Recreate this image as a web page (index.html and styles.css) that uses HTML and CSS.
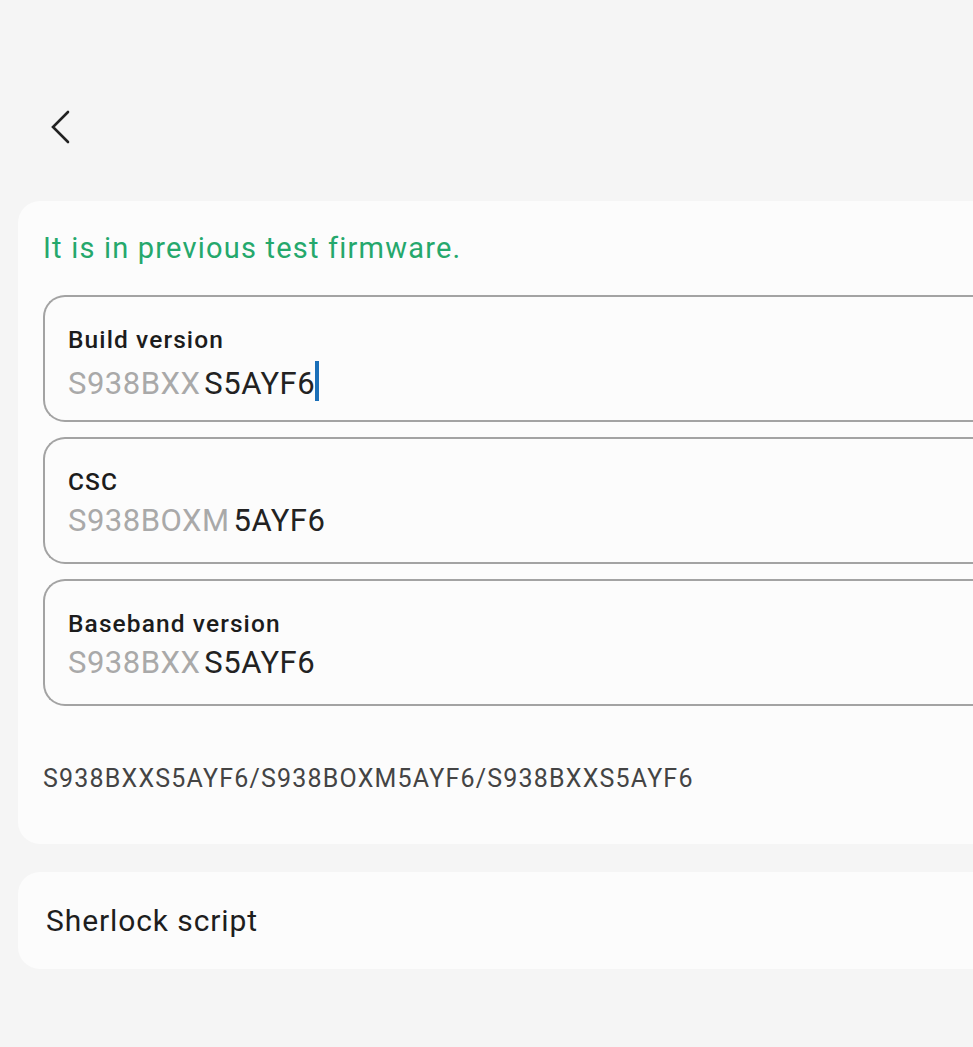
FILE: index.html
```html
<!DOCTYPE html>
<html lang="en">
<head>
  <meta charset="UTF-8">
  <title>Firmware check</title>
  <link rel="stylesheet" href="styles.css">
</head>
<body>

  <!-- Top bar -->
  <div class="topbar">
    <button class="back-btn" aria-label="Back">
      <svg width="32" height="40" viewBox="0 0 32 40">
        <path d="M24 5 L9 20 L24 35" fill="none" stroke="#222" stroke-width="2.6" stroke-linecap="round" stroke-linejoin="miter"/>
      </svg>
    </button>
  </div>

  <!-- Firmware card -->
  <div class="card firmware-card">
    <p class="notice">It is in previous test firmware.</p>

    <div class="field">
      <div class="field-label">Build version</div>
      <div class="field-value"><span class="prefix">S938BXX</span><span class="suffix">S5AYF6</span><span class="cursor"></span></div>
    </div>

    <div class="field">
      <div class="field-label">CSC</div>
      <div class="field-value"><span class="prefix">S938BOXM</span><span class="suffix">5AYF6</span></div>
    </div>

    <div class="field">
      <div class="field-label">Baseband version</div>
      <div class="field-value"><span class="prefix">S938BXX</span><span class="suffix">S5AYF6</span></div>
    </div>

    <p class="summary">S938BXXS5AYF6/S938BOXM5AYF6/S938BXXS5AYF6</p>
  </div>

  <!-- Script row -->
  <div class="card row-card">
    <span class="row-title">Sherlock script</span>
  </div>

</body>
</html>
```

FILE: styles.css
```css
* {
  box-sizing: border-box;
}
body {
  margin: 0;
  padding: 0;
  background: #f5f5f5;
  font-family: Roboto, 'Noto Sans', sans-serif;
  overflow: hidden;
}

/* Top bar */
.topbar {
  height: 201px;
  padding: 107px 0 0 44px;
}
.back-btn {
  background: none;
  border: none;
  padding: 0;
  display: block;
  cursor: pointer;
}

/* Cards - they run off the right edge of the screen */
.card {
  margin-left: 18px;
  background: #fcfcfc;
  border-radius: 22px 0 0 22px;
}
.firmware-card {
  height: 643px;
  padding: 30px 0 0 25px;
}
.notice {
  margin: 0 0 30px 0;
  font-size: 29px;
  line-height: 34px;
  letter-spacing: 1.2px;
  color: #25a86c;
}

/* Fields */
.field {
  height: 127px;
  border: 2px solid #a3a3a3;
  border-right: none;
  border-radius: 22px 0 0 22px;
  padding: 29px 0 0 23px;
  margin-bottom: 15px;
}
.field-label {
  font-size: 24.5px;
  font-weight: 500;
  line-height: 28px;
  letter-spacing: 1.1px;
  color: #1c1c1c;
}
.field-value {
  margin-top: 7px;
  font-size: 31px;
  line-height: 36px;
  letter-spacing: 0.5px;
  white-space: nowrap;
}
.prefix {
  color: #a9a9a9;
}
.suffix {
  color: #222;
  margin-left: 4px;
}
.cursor {
  display: inline-block;
  width: 3.5px;
  height: 40px;
  background: #1a6fb8;
  vertical-align: -7px;
}

.summary {
  margin: 58px 0 0 0;
  font-size: 25px;
  line-height: 30px;
  letter-spacing: 1.2px;
  color: #444;
}

/* Script row */
.row-card {
  margin-top: 28px;
  height: 97px;
  padding-left: 28px;
  display: flex;
  align-items: center;
}
.row-title {
  font-size: 30px;
  letter-spacing: 0.9px;
  color: #1e1e1e;
}
```
